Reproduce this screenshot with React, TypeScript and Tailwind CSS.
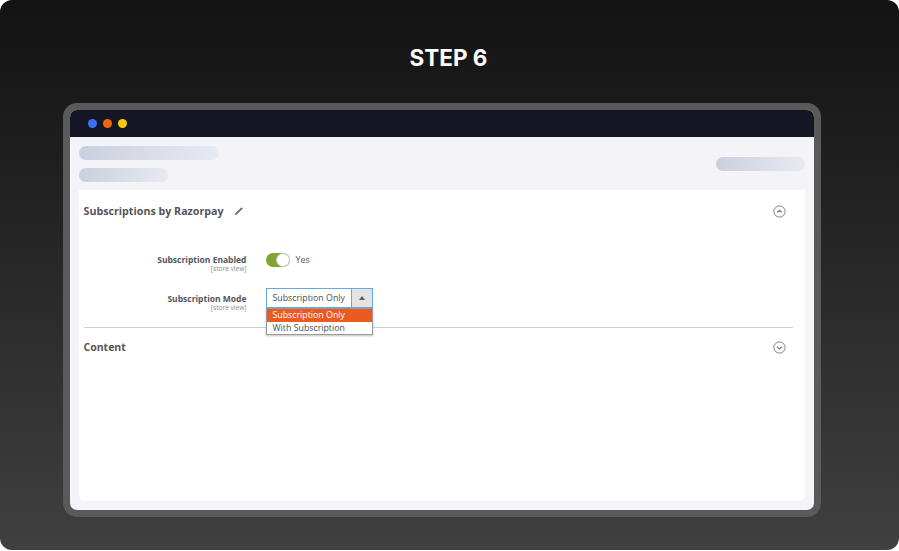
import React from 'react';

const sans = { fontFamily: '"Open Sans", sans-serif' };

function Skeleton({ className }: { className: string }) {
  return <div className={`h-[14px] rounded-full bg-gradient-to-r from-[#c9d0de] to-[#e8eaf1] ${className}`} />;
}

function CircleChevron({ up }: { up?: boolean }) {
  return (
    <svg width="13" height="13" viewBox="0 0 13 13" fill="none" stroke="#808085" strokeWidth="1">
      <circle cx="6.5" cy="6.5" r="5.6" />
      <path d={up ? 'M4 7.4 L6.5 5.2 L9 7.4' : 'M4 5.8 L6.5 8 L9 5.8'} strokeWidth="1.2" />
    </svg>
  );
}

function Label({ title }: { title: string }) {
  return (
    <div className="w-[163px] text-right">
      <div className="text-[8.5px] leading-[11px] font-bold text-[#55555a]">{title}</div>
      <div className="text-[6.6px] leading-[8px] text-[#8a8a8f]">[store view]</div>
    </div>
  );
}

export default function App() {
  return (
    <div className="bg-white w-[899px] h-[551px]">
      <div className="w-[899px] h-[550px] rounded-[12px] bg-gradient-to-b from-[#131313] to-[#404040] flex flex-col">
        <h1 className="mt-[44px] h-[28px] pr-[2px] text-center text-[22.5px] leading-[28px] font-bold text-white" style={{ fontFamily: 'Inter, sans-serif' }}>
          STEP 6
        </h1>

        {/* Fenêtre */}
        <div className="mt-[31px] ml-[63px] w-[758px] h-[414px] rounded-[14px] border-[7px] border-[#5a5a5a] overflow-hidden flex flex-col bg-[#f3f3f8]" style={sans}>
          <div className="h-[27px] bg-[#151624] flex items-center gap-[6px] pl-[18px] shrink-0">
            <span className="w-[9px] h-[9px] rounded-full bg-[#3b6ff5]" />
            <span className="w-[9px] h-[9px] rounded-full bg-[#f2640f]" />
            <span className="w-[9px] h-[9px] rounded-full bg-[#fdc70c]" />
          </div>

          <div className="flex-1 flex flex-col px-[9px] pb-[9px]">
            <div className="h-[53px] flex justify-between shrink-0">
              <div className="pt-[9px] flex flex-col gap-[8px]">
                <Skeleton className="w-[140px]" />
                <Skeleton className="w-[89px]" />
              </div>
              <Skeleton className="w-[89px] mt-[20px]" />
            </div>

            <div className="flex-1 bg-white rounded-b-[6px] pl-[4.5px] pr-[12px]">
              <div className="h-[43px] flex items-center justify-between pr-[7px]">
                <div className="flex items-center gap-[10px]">
                  <span className="text-[10.7px] font-bold text-[#55555a]">Subscriptions by Razorpay</span>
                  <svg width="10" height="10" viewBox="0 0 10 10" fill="#6a6a6e">
                    <path d="M1 9 L1.5 7.2 L7.5 1.2 L8.8 2.5 L2.8 8.5 Z" />
                  </svg>
                </div>
                <CircleChevron up />
              </div>

              <div className="mt-[20px] flex items-start h-[35px]">
                <div className="pt-[1px]">
                  <Label title="Subscription Enabled" />
                </div>
                <div className="ml-[19px] flex items-center gap-[6px]">
                  <div className="w-[24px] h-[14px] rounded-full bg-[#7da52f] relative">
                    <span className="absolute right-0 top-0 w-[14px] h-[14px] rounded-full bg-white border border-[#c9c9c9]" />
                  </div>
                  <span className="text-[9px] text-[#56565a]">Yes</span>
                </div>
              </div>

              <div className="flex items-start h-[39px]">
                <div className="pt-[4.5px]">
                  <Label title="Subscription Mode" />
                </div>
                <div className="ml-[19px] relative">
                  <div className="w-[107px] h-[20px] flex border border-[#68a8e0] bg-white">
                    <span className="flex-1 pl-[6px] text-[8.8px] leading-[19px] text-[#4d4d52]">Subscription Only</span>
                    <span className="w-[21px] border-l border-[#68a8e0] bg-[#e3e3e3] flex items-center justify-center">
                      <span className="w-0 h-0 border-x-[3px] border-x-transparent border-b-[4px] border-b-[#606060]" />
                    </span>
                  </div>
                  <div className="absolute left-0 top-[20px] w-[107px] border border-[#9a9a9a] bg-white shadow-[0_1px_2px_rgba(0,0,0,0.25)] text-[8.8px]">
                    <div className="bg-[#ea5a22] text-white pl-[6px] leading-[13px]">Subscription Only</div>
                    <div className="text-[#4d4d52] pl-[6px] leading-[12px]">With Subscription</div>
                  </div>
                </div>
              </div>

              <div className="border-t border-[#cfcfcf] h-[39px] flex items-center justify-between pr-[7px]">
                <span className="pt-[2px] text-[10.5px] font-bold text-[#55555a]">Content</span>
                <CircleChevron />
              </div>
            </div>
          </div>
        </div>
      </div>
    </div>
  );
}
